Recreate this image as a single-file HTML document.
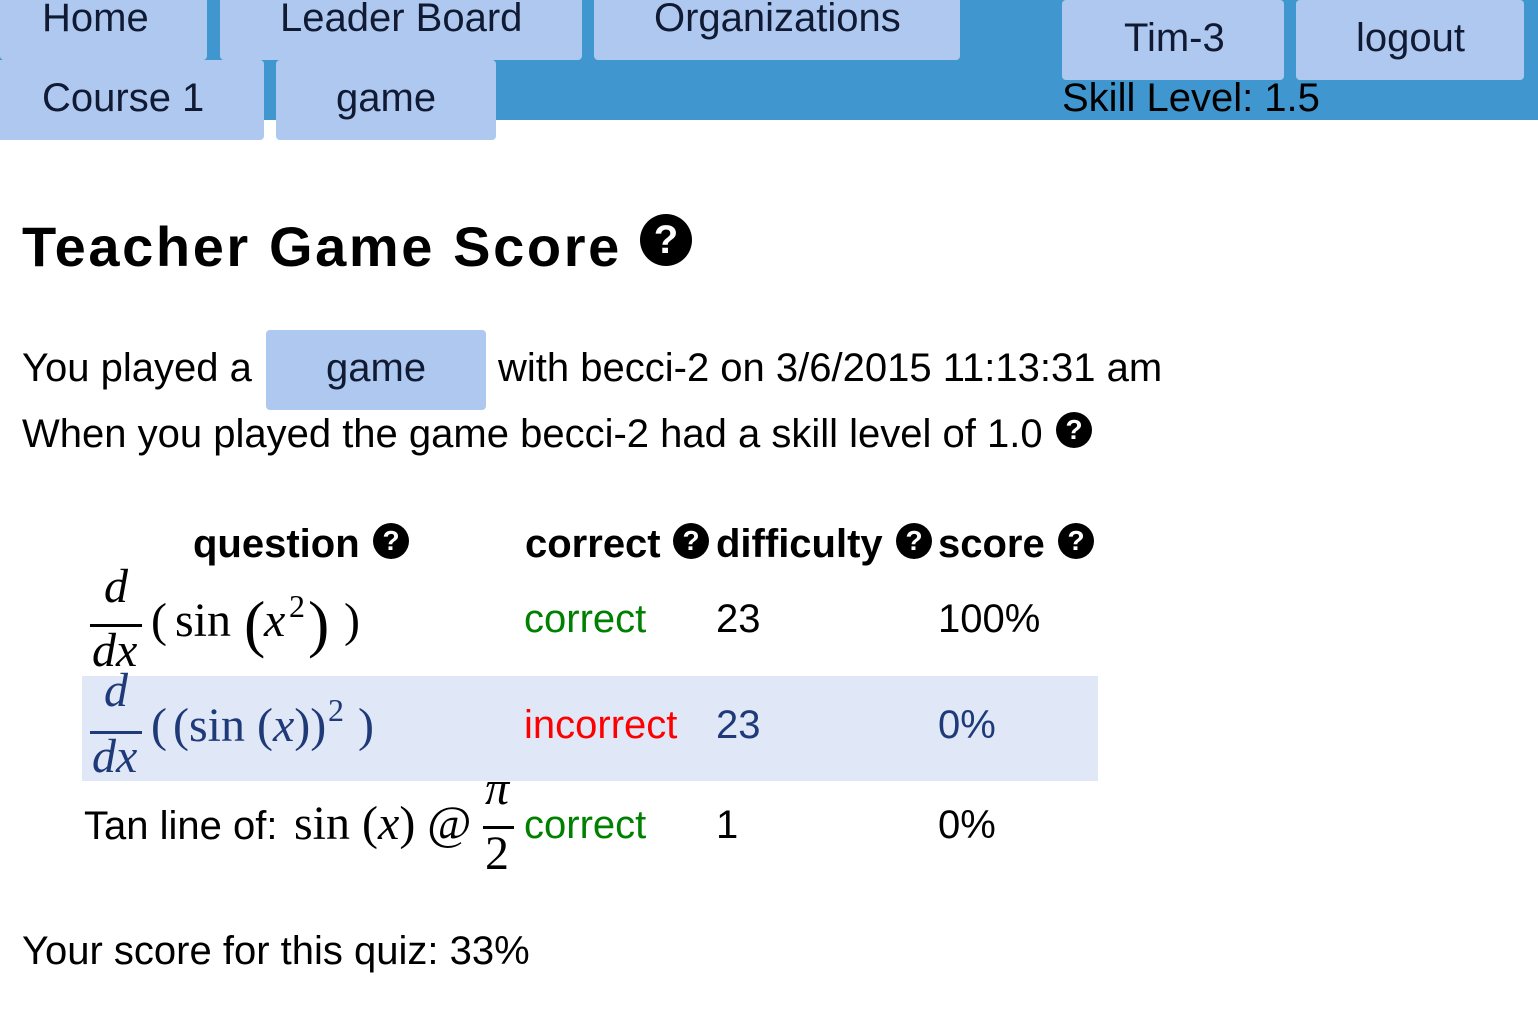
<!DOCTYPE html>
<html><head><meta charset="utf-8"><style>
body{margin:0;width:1538px;height:1032px;position:relative;background:#fff;overflow:hidden;font-family:"Liberation Sans",Arial,sans-serif;color:#000}
.a{position:absolute;white-space:nowrap;font-size:40px;line-height:40px}
.s{font-family:"Liberation Serif",serif;font-size:48px;line-height:48px}
.i{font-style:italic}
.btn{position:absolute;background:#aec8f0;border-radius:0 0 4px 4px;color:#111a33;font-size:40px;line-height:40px;text-align:center}
.q{position:absolute;width:36px;height:36px;border-radius:50%;background:#000;color:#fff;font-weight:bold;font-size:28px;line-height:36px;text-align:center;font-family:"Liberation Sans",sans-serif}
.bar{position:absolute;height:3px;background:currentColor}
</style></head><body>
<div style="position:absolute;left:0;top:0;width:1538px;height:120px;background:#4096ce"></div>
<div class="btn" style="left:0;top:0;width:207px;height:60px;text-align:left"><span style="position:absolute;left:42px;top:-2px">Home</span></div>
<div class="btn" style="left:220px;top:0;width:362px;height:60px"><span style="position:absolute;left:60px;top:-2px">Leader Board</span></div>
<div class="btn" style="left:594px;top:0;width:366px;height:60px"><span style="position:absolute;left:60px;top:-2px">Organizations</span></div>
<div class="btn" style="left:1062px;top:0;width:222px;height:80px;border-radius:4px"><span style="position:absolute;left:62px;top:18px">Tim-3</span></div>
<div class="btn" style="left:1296px;top:0;width:228px;height:80px;border-radius:4px"><span style="position:absolute;left:60px;top:18px">logout</span></div>
<div class="btn" style="left:0;top:60px;width:264px;height:80px;border-radius:0 4px 4px 0"><span style="position:absolute;left:42px;top:18px">Course 1</span></div>
<div class="btn" style="left:276px;top:60px;width:220px;height:80px;border-radius:4px"><span style="position:absolute;left:60px;top:18px">game</span></div>
<div class="a" style="left:1062px;top:78px">Skill Level: 1.5</div>

<div class="a" style="left:22px;top:219px;font-size:56px;line-height:56px;font-weight:bold;letter-spacing:2.6px">Teacher Game Score</div>
<div class="q" style="left:640px;top:214px;width:52px;height:52px;line-height:52px;font-size:40px">?</div>

<div class="a" style="left:22px;top:348px">You played a</div>
<div class="btn" style="left:266px;top:330px;width:220px;height:80px;border-radius:4px"><span style="position:absolute;left:60px;top:18px">game</span></div>
<div class="a" style="left:498px;top:348px">with becci-2 on 3/6/2015 11:13:31 am</div>
<div class="a" style="left:22px;top:414px">When you played the game becci-2 had a skill level of 1.0</div>
<div class="q" style="left:1056px;top:412px">?</div>

<div class="a" style="left:193px;top:524px;font-weight:bold">question</div><div class="q" style="left:373px;top:523px">?</div>
<div class="a" style="left:525px;top:524px;font-weight:bold">correct</div><div class="q" style="left:673px;top:523px">?</div>
<div class="a" style="left:716px;top:524px;font-weight:bold">difficulty</div><div class="q" style="left:896px;top:523px">?</div>
<div class="a" style="left:938px;top:524px;font-weight:bold">score</div><div class="q" style="left:1058px;top:523px">?</div>

<!-- row1 -->
<div class="a s i" style="left:104px;top:563px">d</div>
<div class="bar" style="left:90px;top:624px;width:52px;color:#000"></div>
<div class="a s i" style="left:92px;top:627px">dx</div>
<div class="a s" style="left:151px;top:597px">(</div>
<div class="a s" style="left:175px;top:597px">sin</div>
<div class="a s" style="left:244px;top:592px;font-size:64px;line-height:64px">(</div>
<div class="a s i" style="left:264px;top:597px">x</div>
<div class="a s" style="left:289px;top:590px;font-size:32px;line-height:32px">2</div>
<div class="a s" style="left:308px;top:592px;font-size:64px;line-height:64px">)</div>
<div class="a s" style="left:344px;top:597px">)</div>
<div class="a" style="left:524px;top:599px;color:#008000">correct</div>
<div class="a" style="left:716px;top:599px">23</div>
<div class="a" style="left:938px;top:599px">100%</div>

<!-- row2 -->
<div style="position:absolute;left:82px;top:676px;width:1016px;height:105px;background:#e0e8f8"></div>
<div style="color:#1f3a78">
<div class="a s i" style="left:104px;top:667px">d</div>
<div class="bar" style="left:90px;top:731px;width:52px"></div>
<div class="a s i" style="left:92px;top:733px">dx</div>
<div class="a s" style="left:151px;top:702px">(</div>
<div class="a s" style="left:173px;top:702px">(sin (<span class="i">x</span>))</div>
<div class="a s" style="left:328px;top:694px;font-size:32px;line-height:32px">2</div>
<div class="a s" style="left:358px;top:702px">)</div>
<div class="a" style="left:716px;top:705px">23</div>
<div class="a" style="left:938px;top:705px">0%</div>
</div>
<div class="a" style="left:524px;top:705px;color:#ff0000">incorrect</div>

<!-- row3 -->
<div class="a" style="left:84px;top:806px">Tan line of:</div>
<div class="a s" style="left:294px;top:800px">sin (<span class="i">x</span>) @</div>
<div class="a s i" style="left:485px;top:765px">π</div>
<div class="bar" style="left:483px;top:826px;width:31px;color:#000"></div>
<div class="a s" style="left:485px;top:830px">2</div>
<div class="a" style="left:524px;top:805px;color:#008000">correct</div>
<div class="a" style="left:716px;top:805px">1</div>
<div class="a" style="left:938px;top:805px">0%</div>

<div class="a" style="left:22px;top:931px">Your score for this quiz: 33%</div>
</body></html>
